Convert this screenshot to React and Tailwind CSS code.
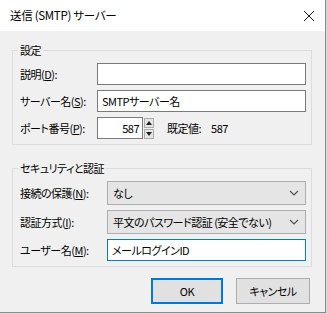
const Chevron = () => (
  <svg width="10" height="6" viewBox="0 0 10 6" className="shrink-0">
    <path d="M1 1 L5 5 L9 1" fill="none" stroke="#505050" strokeWidth="1.2" />
  </svg>
);

const Label = ({ text, mnemonic, width }) => (
  <div className={`shrink-0 ${width} leading-[16px] text-black whitespace-nowrap`}>
    {text}(<span className="underline">{mnemonic}</span>):
  </div>
);

const TextBox = ({ value, focused }) => (
  <div
    className={`flex items-center h-[22px] flex-1 bg-white px-[4px] text-black border ${
      focused ? 'border-[#0078d7]' : 'border-[#7a7a7a]'
    }`}
  >
    {value}
  </div>
);

const Combo = ({ value }) => (
  <div className="flex items-center justify-between h-[24px] flex-1 bg-[#e5e5e5] border border-[#adadad] pl-[5px] pr-[6px] text-black">
    <span className="whitespace-nowrap">{value}</span>
    <Chevron />
  </div>
);

export default function App() {
  return (
    <div className="w-[327px] h-[314px] bg-[#d8d8d8] font-['Noto_Sans_CJK_JP','Noto_Sans',sans-serif] [font-feature-settings:'palt'] text-[11px] tracking-[-0.5px]">
      <div className="w-[326px] h-[313px] flex flex-col bg-[#f0f0f0] border-r border-b border-[#8a8a8a]">
        {/* Title bar */}
        <div className="h-[31px] shrink-0 bg-white flex items-center justify-between pl-[10px] pr-[10px]">
          <span className="text-black text-[11.5px] tracking-[-0.3px]">送信 (SMTP) サーバー</span>
          <svg width="12" height="12" viewBox="0 0 12 12">
            <path d="M1 1 L11 11 M11 1 L1 11" stroke="#111" strokeWidth="1" />
          </svg>
        </div>

        <div className="flex flex-col pl-[12px] pr-[13px] pt-[11px]">
          {/* 設定 */}
          <fieldset className="border border-[#dcdcdc] pl-[7px] pr-[5px] pt-[5px] pb-[5px] flex flex-col gap-[5px]">
            <legend className="-ml-[2px] px-[2px] leading-[16px] text-black">設定</legend>
            <div className="flex items-center">
              <Label text="説明" mnemonic="D" width="w-[77px]" />
              <TextBox value="" />
            </div>
            <div className="flex items-center">
              <Label text="サーバー名" mnemonic="S" width="w-[77px]" />
              <TextBox value="SMTPサーバー名" />
            </div>
            <div className="flex items-center">
              <Label text="ポート番号" mnemonic="P" width="w-[77px]" />
              <div className="flex items-center h-[22px] w-[46px] min-w-[46px] max-w-[46px] shrink-0 bg-white border border-[#7a7a7a] justify-end pr-[3px] text-black">
                587
              </div>
              <div className="flex flex-col h-[21px] w-[10px] shrink-0 ml-[1px] gap-[1px]">
                <div className="flex-1 bg-[#e5e5e5] border border-[#adadad] flex items-center justify-center">
                  <svg width="6" height="4" viewBox="0 0 6 4"><path d="M0 4 L3 0 L6 4 Z" fill="#222" /></svg>
                </div>
                <div className="flex-1 bg-[#e5e5e5] border border-[#adadad] flex items-center justify-center">
                  <svg width="6" height="4" viewBox="0 0 6 4"><path d="M0 0 L6 0 L3 4 Z" fill="#222" /></svg>
                </div>
              </div>
              <span className="ml-[13px] text-black">既定値:</span>
              <span className="ml-[10px] text-black">587</span>
            </div>
          </fieldset>

          {/* セキュリティと認証 */}
          <fieldset className="mt-[15px] border border-[#dcdcdc] pl-[7px] pr-[5px] pt-[5px] pb-[5px] flex flex-col gap-[5px]">
            <legend className="-ml-[2px] px-[2px] leading-[16px] text-black">セキュリティと認証</legend>
            <div className="flex items-center">
              <Label text="接続の保護" mnemonic="N" width="w-[87px]" />
              <Combo value="なし" />
            </div>
            <div className="flex items-center">
              <Label text="認証方式" mnemonic="I" width="w-[87px]" />
              <Combo value="平文のパスワード認証 (安全でない)" />
            </div>
            <div className="flex items-center">
              <Label text="ユーザー名" mnemonic="M" width="w-[87px]" />
              <TextBox value="メールログインID" focused />
            </div>
          </fieldset>

          {/* Buttons */}
          <div className="flex justify-end gap-[13px] mt-[11px] pr-[2px]">
            <button className="w-[72px] h-[26px] bg-[#e1e1e1] border-2 border-[#0078d7] text-black">
              OK
            </button>
            <button className="w-[74px] h-[26px] bg-[#e1e1e1] border border-[#adadad] text-black">
              キャンセル
            </button>
          </div>
        </div>
      </div>
    </div>
  );
}
